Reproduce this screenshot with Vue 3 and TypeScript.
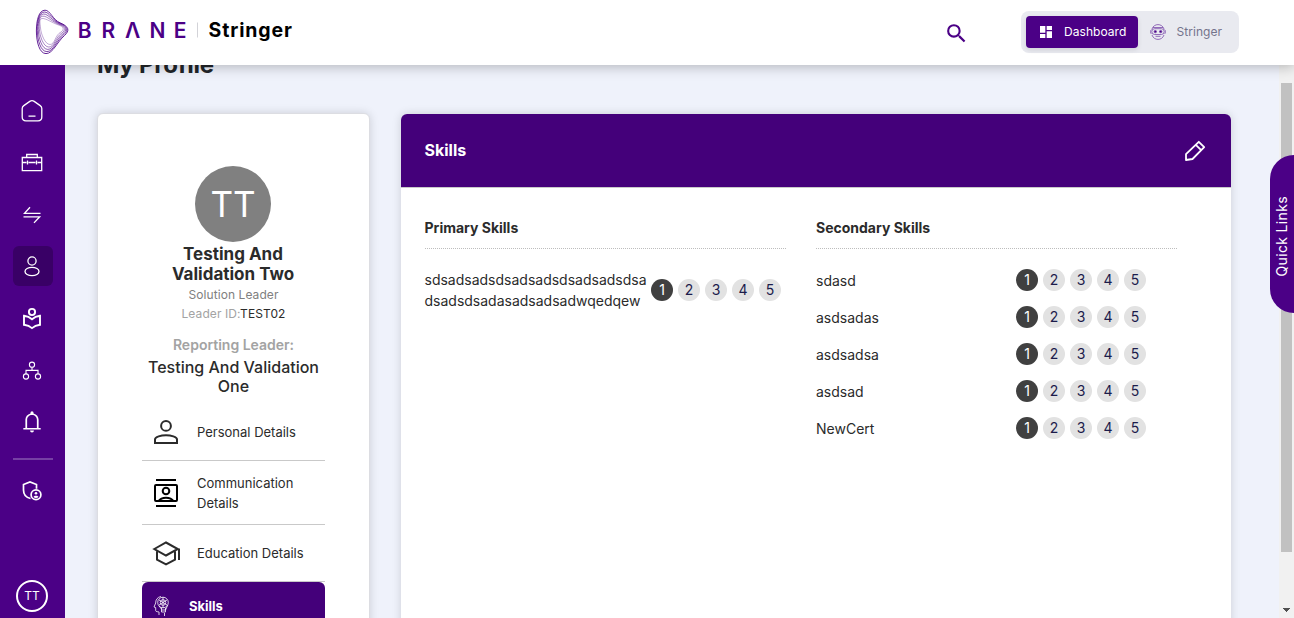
<script setup lang="ts">
interface Skill {
  name: string
  level: number
}

const levels = [1, 2, 3, 4, 5]
const primary: Skill[] = [{ name: 'sdsadsadsdsadsadsdsadsadsdsadsadsdsadasadsadsadwqedqew', level: 1 }]
const secondary: Skill[] = ['sdasd', 'asdsadas', 'asdsadsa', 'asdsad', 'NewCert'].map((name) => ({ name, level: 1 }))

// The logo mark is a family of outlines blended between an outer and an inner loop.
const outer = [45, 10.2, 50, 10, 53, 20, 60, 22.8, 69, 26.5, 70, 30.5, 64.5, 35.5, 57, 42, 53, 53.6, 46, 53.6, 39.5, 53.6, 36.4, 42, 36.4, 31, 36.4, 20, 39, 10.2, 45, 10.2]
const inner = [42, 18.5, 46, 18, 52, 23, 60, 25.5, 64, 27, 64, 30, 61, 32, 55, 35, 55, 44.5, 50, 44.5, 45, 44.5, 41, 34, 40.5, 28, 40, 23, 39, 19, 42, 18.5]
const loops = [0, 0.22, 0.46, 0.72, 1].map((t) => {
  const p = outer.map((v, i) => (v + (inner[i] - v) * t).toFixed(2))
  return { d: `M${p[0]} ${p[1]}C${p.slice(2).join(' ')}Z`, opacity: 1 - t * 0.6 }
})
</script>

<template>
  <div class="app">
    <header class="topbar">
      <svg class="logo" width="300" height="65" viewBox="0 0 300 65">
        <g fill="none" stroke="#4b0086" stroke-width=".85">
          <path v-for="(l, i) in loops" :key="i" :d="l.d" :stroke-opacity="l.opacity" />
        </g>
        <g class="brand">
          <text x="77.8" y="37.500">B</text>
          <text x="101.500" y="37.500">R</text>
          <text x="125" y="37.500">Λ</text>
          <text x="149.500" y="37.500">N</text>
          <text x="173.800" y="37.500">E</text>
        </g>
        <path d="M197.500 22.500v15" stroke="#d3d3d8" />
        <text class="product" x="208.500" y="37" textLength="83.500">Stringer</text>
      </svg>
      <svg class="search" width="25" height="25" viewBox="0 0 24 24" fill="#4b0086"><path d="M15.500 14h-.79l-.28-.27A6.470 6.470 0 0 0 16 9.500 6.500 6.500 0 1 0 9.500 16c1.610 0 3.090-.59 4.230-1.570l.27.28v.79l5 4.990L20.490 19zm-6 0a4.500 4.500 0 1 1 0-9 4.500 4.500 0 0 1 0 9" /></svg>
      <div class="switch">
        <div class="tab on">
          <svg width="16" height="16" viewBox="0 0 24 24" fill="#fff"><path d="M3 13h8V3H3zm0 8h8v-6H3zm10 0h8V11h-8zm0-18v6h8V3z" /></svg>
          <span>Dashboard</span>
        </div>
        <div class="tab">
          <svg width="16" height="16" viewBox="0 0 16 16" fill="none" stroke="#7b4bab" stroke-width=".8">
            <path d="M2 5C3 2 5.500.6 8 .6S13 2 14 5M2 11c1 3 3.500 4.400 6 4.400s5-1.400 6-4.400M3 3.500h10M5.500 12.300h5" />
            <rect x="1.800" y="4.700" width="12.400" height="5.800" rx="2.900" /><path d="M1.500 5.500C.3 6 .3 9.500 1.500 10M14.500 5.500c1.200.5 1.200 4 0 4.500" />
            <circle cx="5.300" cy="7.600" r="1.200" fill="#4b0086" /><circle cx="10.700" cy="7.600" r="1.200" fill="#4b0086" />
          </svg>
          <span>Stringer</span>
        </div>
      </div>
    </header>

    <div class="body">
      <nav class="side">
        <div class="tile"><svg width="24" height="24" viewBox="0 0 24 24"><path d="M2.200 9.500c0-1.300.5-2.100 1.600-2.900l6-4.200c1.500-1 2.900-1 4.400 0l6 4.200c1.100.8 1.600 1.600 1.600 2.900V18c0 2.600-1.300 3.800-3.800 3.800H6c-2.500 0-3.800-1.200-3.800-3.800zM8.500 17.200h7" /></svg></div>
        <div class="tile"><svg width="24" height="24" viewBox="0 0 24 24"><path d="M2.300 6.500h19.400v13.200H2.300zM6.700 6.500v-3h10.600v3M2.300 11.500h4.200m2 0h7m2 0h4.200M7.500 9.500v4M16.500 9.500v4" /></svg></div>
        <div class="tile"><svg width="24" height="24" viewBox="0 0 24 24"><path d="M20.500 10.300H4.500L10 4.200M3.500 13.800h16.200L14 19.900" /></svg></div>
        <div class="tile on"><svg width="24" height="24" viewBox="0 0 24 24"><circle cx="12" cy="7" r="4.100" /><ellipse cx="12" cy="17.500" rx="7" ry="4.200" /></svg></div>
        <div class="tile"><svg class="bold" width="24" height="24" viewBox="0 0 24 24"><circle cx="12" cy="5" r="3.100" /><path d="M4 8.800c3 .3 5.800 1.400 8 3.400 2.200-2 5-3.100 8-3.400v9c-3 .4-5.800 1.400-8 3.300-2.200-1.900-5-2.900-8-3.300z" /></svg></div>
        <div class="tile"><svg class="thin" width="24" height="24" viewBox="0 0 24 24"><circle cx="12" cy="5.700" r="2.600" /><circle cx="6" cy="17.500" r="2.600" /><circle cx="18" cy="17.500" r="2.600" /><path d="M12 8.300v3M6 14.900v-3.500h12v3.500" /></svg></div>
        <div class="tile"><svg class="fill" width="26" height="26" viewBox="0 0 24 24"><path d="M4 19v-1.500h1.900V10c0-2.900 1.800-5.200 4.700-5.900v-.6a1.400 1.400 0 0 1 2.800 0v.6c2.900.7 4.700 3 4.700 5.900v7.500H20V19zm8 2.700a1.800 1.800 0 0 1-1.800-1.800h3.600A1.800 1.800 0 0 1 12 21.700m-4.500-4.200h9V10c0-2.600-1.900-4.500-4.500-4.500S7.500 7.400 7.500 10z" /></svg></div>
        <div class="rule"></div>
        <div class="tile"><svg class="shield" width="24" height="24" viewBox="0 0 24 24"><path d="M10.500 19.500C6 18.500 3.500 15 3.500 11V5.500L10 3l6.500 2.500v4.200" /><circle cx="16" cy="15.800" r="4.900" /><circle class="dot" cx="16" cy="14.200" r="1.300" /><path class="dot" d="M13.500 18c.6-1.800 4.400-1.800 5 0-1.200 1.300-3.800 1.300-5 0" /></svg></div>
        <div class="me">TT</div>
      </nav>

      <main class="content">
        <h1>My Profile</h1>
        <div class="cards">
          <section class="card profile">
            <div class="photo">TT</div>
            <h2>Testing And<br />Validation Two</h2>
            <p class="role">Solution Leader</p>
            <p class="role id">Leader ID:<b>TEST02</b></p>
            <p class="report">Reporting Leader:</p>
            <p class="boss">Testing And Validation One</p>
            <div class="menu">
              <div class="item personal">
                <svg width="28" height="28" viewBox="0 0 28 28" fill="none" stroke="#2b2b2b" stroke-width="2"><circle cx="14" cy="7.900" r="4.900" /><path d="M3 25v-3.500c0-2.700 6-4.300 11-4.300s11 1.600 11 4.300V25z" /></svg>
                <span>Personal Details</span>
              </div>
              <div class="item comm">
                <svg width="28" height="28" viewBox="0 0 28 28" fill="none" stroke="#000" stroke-width="2"><path d="M4 1h20M4 27h20M6.500 22c3-4.500 12-4.500 15 0" /><rect x="3" y="6" width="22" height="16" rx="1" /><circle cx="14" cy="12" r="3.300" /></svg>
                <span>Communication<br />Details</span>
              </div>
              <div class="item edu">
                <svg width="28" height="28" viewBox="0 0 28 28" fill="none" stroke="#2b2b2b" stroke-width="2"><path d="M2.300 10 14 3.500 25.800 10 14 16.500zM5 12.500v8.200l9 4.600 9-4.600v-8.200M27 9.500V21" /></svg>
                <span>Education Details</span>
              </div>
              <div class="item current">
                <svg width="18" height="22" viewBox="0 0 18 22" fill="none" stroke="#fff" stroke-width=".8"><path d="M8 1.500C4.500 2 2.500 5 2.700 8L1 12l1.700.6v3.200c0 1.200 3.300.8 3.300 1.200V20M11.500 21v-3" /><circle cx="10" cy="7.500" r="5.300" /><circle cx="10" cy="7.500" r="2.800" /><path d="M6 5l8 5M14 5l-8 5M10 2v11M8.500 13v4h4v-4M8.500 15h4M14.800 10l-2.300 5M6 11l2.500 3" /></svg>
                <span>Skills</span>
              </div>
            </div>
          </section>

          <section class="card skills">
            <div class="head">
              <h3>Skills</h3>
              <svg width="24" height="24" viewBox="0 0 24 24" fill="none" stroke="#fff" stroke-width="1.800" stroke-linejoin="round"><path d="M3 21v-5.800L15.800 2.800l5.400 5.400L9.500 20zM12.800 5.800l5.400 5.400" /></svg>
            </div>
            <div class="cols">
              <div class="col wide">
                <h4>Primary Skills</h4>
                <div v-for="s in primary" :key="s.name" class="row">
                  <span class="name">{{ s.name }}</span>
                  <div class="rate"><i v-for="n in levels" :key="n" :class="{ on: n === s.level }">{{ n }}</i></div>
                </div>
              </div>
              <div class="col">
                <h4>Secondary Skills</h4>
                <div v-for="s in secondary" :key="s.name" class="row">
                  <span class="name">{{ s.name }}</span>
                  <div class="rate"><i v-for="n in levels" :key="n" :class="{ on: n === s.level }">{{ n }}</i></div>
                </div>
              </div>
            </div>
          </section>
        </div>
      </main>

      <div class="scroll">
        <div class="thumb"></div>
        <svg width="7" height="4" viewBox="0 0 7 4" fill="#505050" shape-rendering="crispEdges"><path d="M0 0h7v1H6v1H5v1H4v1H3V3H2V2H1V1H0z" /></svg>
      </div>
    </div>
    <div class="quick"><span>Quick Links</span></div>
  </div>
</template>

<style>
html,
body {
  margin: 0;
  overflow: hidden;
}
</style>

<style scoped>
* {
  box-sizing: border-box;
}
.app {
  position: relative;
  width: 1294px;
  height: 618px;
  overflow: hidden;
  display: flex;
  flex-direction: column;
  font-family: Inter, 'Liberation Sans', sans-serif;
  color: #2b2b2b;
  background: #eff2fb;
}
svg {
  flex: none;
  display: block;
}
h1,
h2,
h3,
h4,
p {
  margin: 0;
}
.topbar {
  position: relative;
  z-index: 2;
  flex: none;
  height: 65px;
  display: flex;
  align-items: center;
  background: #fff;
  box-shadow: 0 2px 12px rgba(0, 0, 0, 0.25);
}
.brand text {
  font-size: 21px;
  font-weight: 600;
  fill: #4b0086;
}
.product {
  font-size: 19.5px;
  font-weight: 700;
  fill: #000;
}
.search {
  margin: 1px 0 0 644px;
}
.switch {
  margin: -2px 0 0 52px;
  width: 218px;
  height: 42px;
  padding: 5px;
  display: flex;
  border-radius: 8px;
  background: #e9eaf0;
}
.tab {
  display: flex;
  align-items: center;
  height: 32px;
  padding-left: 11.5px;
  gap: 11px;
  font-size: 12px;
  letter-spacing: 0.05px;
  color: #74748c;
}
.tab.on {
  width: 112px;
  gap: 10.5px;
  border-radius: 4px;
  color: #fff;
  background: #4b0086;
  box-shadow: 0 2px 5px rgba(0, 0, 0, 0.1);
}
.body {
  flex: 1;
  min-height: 0;
  display: flex;
}
.side {
  position: relative;
  z-index: 3;
  flex: none;
  width: 65px;
  padding-top: 26px;
  display: flex;
  flex-direction: column;
  align-items: center;
  gap: 11.8px;
  background: #4b0086;
}
.tile {
  flex: none;
  width: 40px;
  height: 40px;
  display: grid;
  place-items: center;
  border-radius: 6px;
}
.tile.on {
  background: #390066;
}
.tile svg {
  margin-right: 1px;
  fill: none;
  stroke: #fff;
  stroke-width: 1.3;
}
.tile svg.bold {
  margin-top: 2px;
  stroke-width: 1.9;
}
.tile svg.thin {
  margin-top: 2px;
  stroke-width: 1.1;
}
.tile svg.fill {
  fill: #fff;
  stroke: none;
}
.tile svg.shield {
  margin-top: 2px;
  stroke-width: 1.7;
}
.tile .dot {
  fill: #fff;
  stroke: none;
}
.rule {
  flex: none;
  width: 40px;
  height: 2px;
  margin: 4px 0 -1px;
  background: #7640a4;
}
.me {
  flex: none;
  width: 32px;
  height: 32px;
  margin: 58px 1px 0 0;
  border: 2px solid #fff;
  border-radius: 50%;
  color: #fff;
  font-size: 12px;
  line-height: 28px;
  text-align: center;
}
.content {
  flex: 1;
  height: 553px;
  overflow: hidden;
  padding-left: 32px;
}
h1 {
  height: 30px;
  margin-top: -15px;
  font-size: 24px;
  line-height: 30px;
  font-weight: 700;
  letter-spacing: -0.25px;
  color: #212529;
}
.cards {
  margin-top: 33px;
  display: flex;
  gap: 31px;
}
.card {
  height: 700px;
  border: 1px solid #dcdde2;
  border-radius: 6px;
  background: #fff;
  box-shadow: 0 0 10px rgba(0, 0, 0, 0.15);
}
.profile {
  width: 273px;
  padding: 52px 44px 0;
  display: flex;
  flex-direction: column;
  align-items: center;
  text-align: center;
}
.photo {
  flex: none;
  width: 76px;
  height: 76px;
  margin-right: 1px;
  border-radius: 50%;
  background: #808080;
  color: #fff;
  font-size: 35px;
  line-height: 76px;
}
h2 {
  margin: 2px 1px 0 0;
  font-size: 17px;
  line-height: 20px;
  font-weight: 700;
}
.role {
  margin-top: 1px;
  font-size: 12px;
  line-height: 19px;
  letter-spacing: 0.08px;
  color: #808080;
}
.role.id {
  margin-top: 0;
  color: #a3a3a3;
}
.role b {
  font-weight: 400;
  color: #2b2b2b;
}
.report {
  margin-top: 12px;
  font-size: 14px;
  line-height: 20px;
  font-weight: 600;
  color: #a3a3a3;
}
.boss {
  margin-top: 3px;
  font-size: 16px;
  line-height: 19px;
  font-weight: 500;
}
.menu {
  align-self: stretch;
  margin-top: 8px;
  text-align: left;
}
.item {
  display: flex;
  align-items: center;
  padding-left: 10px;
  gap: 17px;
  border-bottom: 1px solid #c9c9c9;
  font-size: 13px;
  line-height: 20px;
}
.personal {
  height: 57px;
}
.comm {
  height: 64px;
}
.edu {
  height: 57px;
}
.current {
  height: 48px;
  padding-left: 11px;
  gap: 18px;
  border: 0;
  border-radius: 6px;
  background: #44007a;
  color: #fff;
  font-weight: 700;
}
.skills {
  width: 830px;
  margin-top: 1px;
  border-width: 0;
}
.head {
  height: 74px;
  padding: 0 24px 0 23.5px;
  display: flex;
  align-items: center;
  justify-content: space-between;
  border-radius: 6px 6px 0 0;
  border-bottom: 1px solid #c9c9c9;
  background: #44007a;
}
h3 {
  margin-top: -1px;
  font-size: 16px;
  line-height: 20px;
  font-weight: 700;
  color: #fff;
}
.cols {
  padding: 29px 0 0 23.5px;
  display: flex;
  gap: 30.5px;
}
.col {
  width: 361px;
}
h4 {
  height: 32px;
  margin-bottom: 20px;
  border-bottom: 1px dotted #bdbdbd;
  font-size: 14px;
  line-height: 21px;
  font-weight: 700;
}
.row {
  display: flex;
  align-items: center;
  margin-bottom: 15px;
  font-size: 14px;
  line-height: 21px;
}
.name {
  width: 200px;
  overflow-wrap: anywhere;
}
.wide .name {
  width: 226.5px;
}
.rate {
  display: flex;
  gap: 5px;
}
.rate i {
  width: 22px;
  height: 22px;
  border-radius: 50%;
  background: #e2e2e2;
  color: #1c1c4c;
  font-style: normal;
  font-size: 14px;
  line-height: 22px;
  text-align: center;
}
.rate i.on {
  background: #404040;
  color: #fff;
}
.scroll {
  flex: none;
  width: 15px;
  padding: 18px 2px 0;
  display: flex;
  flex-direction: column;
  align-items: center;
  background: #f1f1f1;
}
.thumb {
  flex: none;
  width: 11px;
  height: 469px;
  margin-bottom: 56px;
  background: #c1c1c1;
}
.quick {
  position: absolute;
  z-index: 4;
  right: 0;
  top: 155px;
  width: 24px;
  height: 158px;
  padding-top: 4px;
  display: flex;
  align-items: center;
  justify-content: center;
  border-radius: 24px 0 0 24px;
  background: #4b0086;
  color: #fff;
  font-size: 14px;
  letter-spacing: 0.35px;
}
.quick span {
  margin-right: 2px;
  writing-mode: vertical-rl;
  transform: rotate(180deg);
  white-space: nowrap;
}
</style>
